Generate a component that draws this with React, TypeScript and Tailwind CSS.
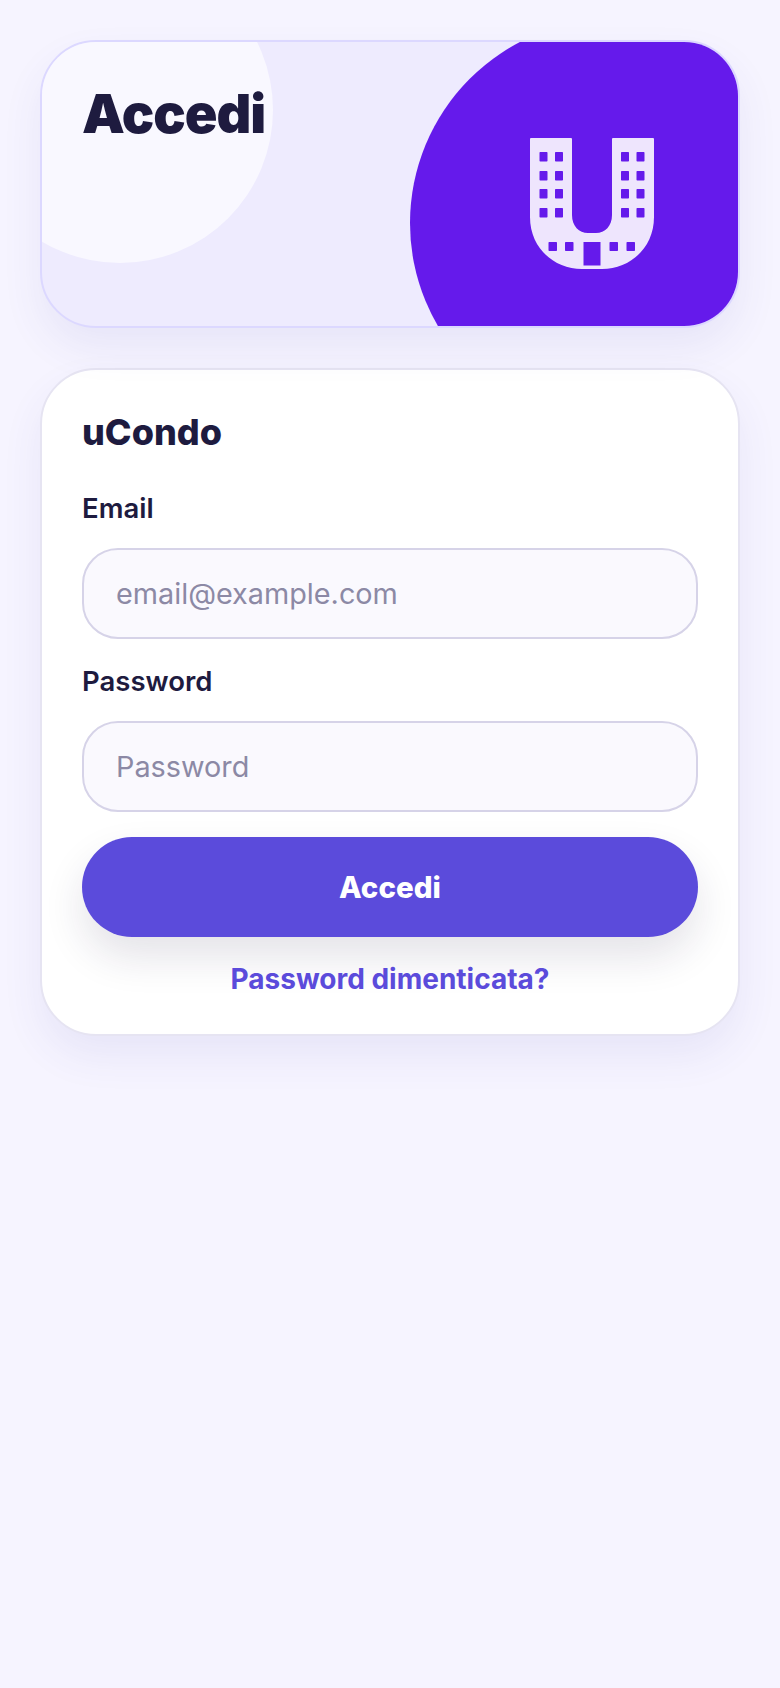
import React from "react";

const INK = "text-[#1e1b3f]";

// building-shaped "U" mark, window cut-outs are drawn in the circle colour
const LogoMark = () => (
  <svg width="124" height="131" viewBox="0 0 124 131" fill="none">
    <path
      d="M1 0H41A1 1 0 0 1 42 1V77C42 88 49 95 58 95H66C75 95 82 88 82 77V1A1 1 0 0 1 83 0H123A1 1 0 0 1 124 1V79C124 110 100 131 72 131H52C24 131 0 110 0 79V1A1 1 0 0 1 1 0Z"
      fill="#eee5fd"
    />
    {[14, 33, 51, 70].map((y) =>
      [9.5, 25, 91, 106.5].map((x) => (
        <rect key={`${x}-${y}`} x={x} y={y} width="8" height="9.5" rx="0.8" fill="#651aeb" />
      ))
    )}
    {[18.5, 35, 79.5, 96.5].map((x) => (
      <rect key={x} x={x} y="104" width="8.5" height="9" rx="0.8" fill="#651aeb" />
    ))}
    <rect x="53.5" y="104" width="17" height="23.5" fill="#651aeb" />
  </svg>
);

const Hero = () => (
  <div className="relative h-[288px] overflow-hidden rounded-[56px] border-2 border-[#dcd8ff] bg-[#eeebfe] shadow-[0_20px_40px_rgba(70,60,170,0.08)]">
    <div className="absolute left-[-75px] top-[-85px] h-[306px] w-[306px] rounded-full bg-[#f9f8ff]" />
    <div className="absolute left-[368px] top-[-23px] h-[408px] w-[408px] rounded-full bg-[#651aeb]" />
    <div className="absolute left-[488px] top-[96px]">
      <LogoMark />
    </div>
    <h1 className={`relative pl-[40px] pt-[34px] text-[54px] font-black leading-[76px] tracking-[-1px] ${INK}`}>
      Accedi
    </h1>
  </div>
);

const Field = ({ label, placeholder, type }: { label: string; placeholder: string; type: string }) => (
  <div>
    <label className={`block text-[27.5px] font-semibold leading-[34px] ${INK}`}>{label}</label>
    <input
      type={type}
      placeholder={placeholder}
      className="mt-[23px] block h-[91px] w-full rounded-[36px] border-2 border-[#d6d3e8] bg-[#faf9fe] px-[32px] text-[28.8px] text-[#1e1b3f] outline-none placeholder:text-[#8c89a5]"
    />
  </div>
);

export default function App() {
  return (
    <div className="min-h-[1688px] bg-[#f6f4ff] p-10 font-['Inter',sans-serif]">
      <div className="flex flex-col gap-10">
        <Hero />
        <div className="rounded-[56px] border-2 border-[#e6e4f2] bg-white px-[40px] pb-[37px] pt-[40px] shadow-[0_20px_40px_rgba(70,60,170,0.08)]">
          <h2 className={`text-[36px] font-extrabold leading-[44px] ${INK}`}>uCondo</h2>
          <div className="mt-[37px] flex flex-col gap-[25px]">
            <Field label="Email" placeholder="email@example.com" type="email" />
            <Field label="Password" placeholder="Password" type="password" />
          </div>
          <button className="mt-[25px] block h-[100px] w-full rounded-[50px] bg-[#5b4bdb] text-[29.5px] font-extrabold text-white shadow-[0_20px_40px_rgba(30,27,63,0.12)]">
            Accedi
          </button>
          <div className="mt-[24px] text-center">
            <a className="text-[28px] font-bold leading-[36px] text-[#5b4bdb]">Password dimenticata?</a>
          </div>
        </div>
      </div>
    </div>
  );
}
